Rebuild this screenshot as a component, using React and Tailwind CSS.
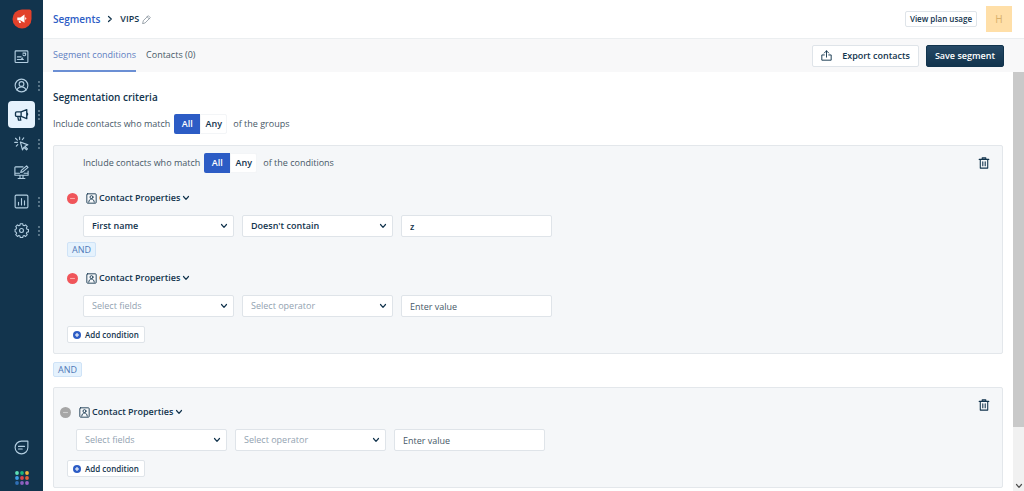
import React from 'react';

const line = {
  fill: 'none',
  stroke: 'currentColor',
  strokeWidth: 1.5,
  strokeLinecap: 'round',
  strokeLinejoin: 'round',
};

const Icon = ({ className = 'size-[15px]', children, ...rest }) => (
  <svg viewBox="0 0 20 20" className={className} aria-hidden="true" {...line} {...rest}>
    {children}
  </svg>
);

const navItems = [
  {
    label: 'Dashboard',
    icon: (
      <Icon>
        <rect x="1.5" y="2.5" width="17" height="15.5" rx="1" />
        <path d="M4.5 10.5h5M4.5 14h8M9.5 14l2-2M12 5.5h3.5v2.2a1.8 1.8 0 0 1-3.5 0" />
      </Icon>
    ),
  },
  {
    label: 'Contacts',
    menu: true,
    icon: (
      <Icon>
        <circle cx="10" cy="10" r="8.5" />
        <circle cx="10" cy="8" r="3.2" />
        <path d="M4 16c1-3 3-4.2 6-4.2s5 1.2 6 4.2" />
      </Icon>
    ),
  },
  {
    label: 'Campaigns',
    menu: true,
    active: true,
    icon: (
      <Icon strokeWidth="1.8">
        <path d="M9.5 6.500 17 3.500v12L9.500 12.500M9.500 6.500H3.500a1.500 1.500 0 0 0-1.500 1.500v3a1.500 1.500 0 0 0 1.500 1.500h6zM5 12.500l1 5h3l-1-5M17 8c1.500 0 1.500 3 0 3" />
      </Icon>
    ),
  },
  {
    label: 'Journeys',
    menu: true,
    icon: (
      <Icon>
        <path d="m8.500 8 10 3.800-4 1.900 3.500 3.600-1.300 1.300-3.500-3.600-1.900 3.500z" />
        <path d="M7.500 1.500v3M2 3l2.500 2.500M1 8.500h3.500M3 13.500 5 11.500M13 2.500 11 5" />
      </Icon>
    ),
  },
  {
    label: 'Web pages',
    icon: (
      <Icon>
        <path d="M12 2.500H2a.8.8 0 0 0-.8.8v10.400h17.600V8M1.200 11h6M13.500 11h5.300M8 13.700V18M12 13.700V18M5.500 18h9" />
        <path d="m9 10 .8-2.800 7-6 1.900 2-7 6z" />
      </Icon>
    ),
  },
  {
    label: 'Reports',
    menu: true,
    icon: (
      <Icon>
        <rect x="1.5" y="1.5" width="17" height="17" rx="1.5" />
        <path d="M6 11v3.500M10 6v8.500M14 9v5.500" />
      </Icon>
    ),
  },
  {
    label: 'Settings',
    menu: true,
    icon: (
      <Icon>
        <path d="M8.300 1.500h3.400l.5 2.300 1.600.7 2-1.300 2.400 2.400-1.300 2 .7 1.600 2.300.5v3.400l-2.300.5-.7 1.600 1.300 2-2.400 2.400-2-1.300-1.600.7-.5 2.300H8.300l-.5-2.300-1.600-.7-2 1.300-2.400-2.400 1.300-2-.7-1.600L.9 13.100V9.700l1.500-.5.7-1.600-1.300-2 2.400-2.400 2 1.300 1.600-.7z" transform="translate(.6 -.5) scale(.94)" />
        <circle cx="10" cy="10" r="2.6" />
      </Icon>
    ),
  },
];

const appDots = [
  'fill-[#5ee0b5]', 'fill-[#19b37d]', 'fill-[#f2b63c]',
  'fill-[#3f9fe8]', 'fill-[#e0434b]', 'fill-[#e2603a]',
  'fill-[#2f6fb5]', 'fill-[#8a5fc0]', 'fill-[#9a62c4]',
];

const Sidebar = () => (
  <nav className="flex w-[43px] shrink-0 flex-col items-center bg-[#12344d] pt-[9px] pb-1.5" aria-label="Main">
    <a href="#home" aria-label="Home" className="mb-3.5">
      <svg viewBox="0 0 20 20" className="size-5" aria-hidden="true">
        <path d="M10 .5h7.500a2 2 0 0 1 2 2V10A9.500 9.500 0 1 1 10 .5z" fill="#e2412b" />
        <path d="M5.300 8.600h3L12.500 5.500v8.200L8.300 11.200h-3zM6.500 11.700h1.800l.7 2.400H7.300zM13.200 8.300c1.600.2 1.600 2.300 0 2.500z" fill="#fff" />
      </svg>
    </a>
    <ul className="flex w-full flex-col gap-0.5">
      {navItems.map((item) => (
        <li key={item.label} className="flex items-center pl-2">
          <a
            href="#nav"
            aria-label={item.label}
            className={`flex size-[27px] items-center justify-center rounded-[4px] ${
              item.active ? 'bg-[#e5f2fd] text-[#12344d]' : 'text-[#b4cfe2]'
            }`}
          >
            {item.icon}
          </a>
          {item.menu && (
            <svg viewBox="0 0 2 10" className="ml-[3px] h-2.5 w-0.5 fill-[#7d95a6]" aria-hidden="true">
              <circle cx="1" cy="1" r=".9" />
              <circle cx="1" cy="5" r=".9" />
              <circle cx="1" cy="9" r=".9" />
            </svg>
          )}
        </li>
      ))}
    </ul>
    <a href="#chat" aria-label="Chat" className="mt-auto text-[#b4cfe2]">
      <Icon>
        <path d="M10 1.500h8.500V10A8.500 8.500 0 1 1 10 1.500zM6 8.500h8M6 12h5" />
      </Icon>
    </a>
    <button type="button" aria-label="Switch app" className="mt-4">
      <svg viewBox="0 0 14 14" className="size-3.5" aria-hidden="true">
        {appDots.map((fill, i) => (
          <circle key={i} cx={2 + (i % 3) * 5} cy={2 + Math.floor(i / 3) * 5} r="1.9" className={fill} />
        ))}
      </svg>
    </button>
  </nav>
);

const Chevron = ({ className }) => (
  <svg viewBox="0 0 8 8" className={className} {...line} strokeWidth="1.2" aria-hidden="true">
    <path d="m1.500 2.500 2.500 2.800 2.500-2.800" />
  </svg>
);

const MatchRow = ({ target, className }) => (
  <div className={`flex items-center text-[9px] text-[#475867] ${className}`}>
    <span>Include contacts who match</span>
    <div className="mr-1.5 ml-1 flex h-5 font-semibold">
      <button type="button" aria-pressed="true" className="w-[26px] rounded-l-[2px] bg-[#2c5cc5] text-white">
        All
      </button>
      <button type="button" aria-pressed="false" className="w-[27px] rounded-r-[2px] border border-[#f3f5f7] bg-white text-[#12344d]">
        Any
      </button>
    </div>
    <span>{target}</span>
  </div>
);

const SelectBox = ({ label, value, placeholder }) => (
  <div className="relative w-[151px]">
    <select
      aria-label={label}
      defaultValue={value || ''}
      className={`block h-[22px] w-full appearance-none rounded-[2px] border border-[#dfe4e9] bg-white px-2 text-[9px] ${
        value ? 'font-semibold text-[#12344d]' : 'text-[#92a2b1]'
      }`}
    >
      <option value={value || ''}>{value || placeholder}</option>
    </select>
    <Chevron className="pointer-events-none absolute top-[7px] right-1.5 size-2 text-[#12344d]" />
  </div>
);

const Condition = ({ field, operator, value, disabled }) => (
  <div>
    <div className="flex h-4 items-center">
      <button type="button" aria-label="Remove condition" disabled={disabled}>
        <svg viewBox="0 0 10 10" className="size-[11px]" aria-hidden="true">
          <circle cx="5" cy="5" r="5" fill={disabled ? '#a6a6a6' : '#f0555a'} />
          <path d="M2.800 5h4.400" stroke={disabled ? '#cfcfcf' : '#fba9a9'} />
        </svg>
      </button>
      <button type="button" className="ml-2 flex items-center text-[9px] font-semibold text-[#12344d]">
        <Icon className="mr-0.5 size-[11px]" strokeWidth="1.6">
          <rect x="1.5" y="1.5" width="17" height="17" rx="1.5" />
          <circle cx="10" cy="7.5" r="2.7" />
          <path d="M5 16.500c.5-3.500 2-5.500 5-5.500s4.500 2 5 5.500" />
        </Icon>
        Contact Properties
        <Chevron className="ml-0.5 size-2" />
      </button>
    </div>
    <div className="mt-[9px] ml-4 flex gap-2">
      <SelectBox label="Field" value={field} placeholder="Select fields" />
      <SelectBox label="Operator" value={operator} placeholder="Select operator" />
      <input
        type="text"
        aria-label="Value"
        defaultValue={value}
        placeholder="Enter value"
        className="h-[22px] w-[151px] rounded-[2px] border border-[#dfe4e9] bg-white px-2 text-[9px] font-semibold text-[#12344d] placeholder:font-normal placeholder:text-[#475867]"
      />
    </div>
  </div>
);

const AndTag = ({ className }) => (
  <div className={`flex h-[15px] w-fit items-center rounded-[2px] border border-[#cfe3f7] bg-[#e5f2fd] px-1 text-[9px] text-[#5078b8] ${className}`}>
    AND
  </div>
);

const AddCondition = () => (
  <button
    type="button"
    className="ml-[13px] flex h-[17px] items-center gap-1 rounded-[2px] border border-[#dfe4e9] bg-white px-[5px] text-[8px] font-semibold text-[#12344d]"
  >
    <svg viewBox="0 0 10 10" className="size-2" aria-hidden="true">
      <circle cx="5" cy="5" r="5" fill="#2c5cc5" />
      <path d="M5 2.500v5M2.500 5h5" stroke="#fff" strokeWidth="1.3" />
    </svg>
    Add condition
  </button>
);

const Group = ({ children }) => (
  <section className="relative rounded-[2px] border border-[#e3e7eb] bg-[#f5f7f9] pb-2.5">
    <button type="button" aria-label="Delete group" className="absolute top-[11px] right-3 text-[#12344d]">
      <Icon className="size-3" strokeWidth="1.8">
        <path d="M2 4h16M7 4V1.500h6V4M3.800 4v14.500h12.400V4M8 8v6.500M12 8v6.500" />
      </Icon>
    </button>
    {children}
  </section>
);

const Header = () => (
  <header className="flex h-[39px] shrink-0 items-center border-b border-[#ebeef0] pr-3 pl-2.5">
    <a href="#segments" className="text-[10px] font-semibold text-[#2c5cc5]">
      Segments
    </a>
    <Chevron className="mx-1.5 size-2 -rotate-90 text-[#12344d]" />
    <span className="text-[9px] font-semibold text-[#12344d]">VIPS</span>
    <button type="button" aria-label="Rename segment" className="ml-[3px] text-[#6f7c87]">
      <Icon className="size-[9px]">
        <path d="m1.500 18.500 1.500-6L14 1.500l4.500 4.500-11 11zM11.500 4l4.500 4.500" />
      </Icon>
    </button>
    <button type="button" className="ml-auto h-4 rounded-[2px] border border-[#dfe4e9] bg-white px-1 text-[8px] font-semibold text-[#12344d]">
      View plan usage
    </button>
    <button type="button" aria-label="Account" className="ml-[9px] size-[26px] bg-[#ffdfa8] text-[10px] text-[#d8b06c]">
      H
    </button>
  </header>
);

const Toolbar = () => (
  <div className="flex h-[33px] shrink-0 items-center bg-[#f8f8f9] pr-5 pl-2.5 text-[9px]">
    <div className="flex gap-2.5 self-stretch">
      <a href="#conditions" className="flex items-center border-b-2 border-[#6b8fd4] text-[#5f80c2]">
        Segment conditions
      </a>
      <a href="#contacts" className="flex items-center border-b-2 border-transparent text-[#475867]">
        Contacts (0)
      </a>
    </div>
    <button type="button" className="ml-auto flex h-[22px] items-center gap-2.5 rounded-[2px] border border-[#dfe4e9] bg-white px-2 font-semibold text-[#12344d]">
      <Icon className="size-[11px]" strokeWidth="1.7">
        <path d="M6 9H1.500v9.500h17V9H14M10 13V1.500M6 5.500l4-4 4 4" />
      </Icon>
      Export contacts
    </button>
    <button type="button" className="ml-[7px] h-[22px] rounded-[2px] border border-[#12344d] bg-linear-to-b from-[#264966] to-[#12344d] px-2 font-semibold text-white">
      Save segment
    </button>
  </div>
);

const App = () => (
  <div className="flex h-screen overflow-hidden bg-white font-['Open_Sans',sans-serif]">
    <Sidebar />
    <div className="flex min-w-0 flex-1 flex-col">
      <Header />
      <Toolbar />
      <div className="flex min-h-0 flex-1">
        <main className="min-w-0 flex-1 overflow-hidden px-2.5 pt-[17px]">
          <h1 className="text-[10px] leading-4 font-semibold text-[#12344d]">Segmentation criteria</h1>
          <MatchRow target="of the groups" className="mt-[9px] mb-[11px]" />

          <Group>
            <MatchRow target="of the conditions" className="mt-[7px] ml-[29px]" />
            <div className="mt-[17px] ml-[13px]">
              <Condition field="First name" operator="Doesn't contain" value="z" />
              <AndTag className="mt-[5px] mb-[13px]" />
              <Condition />
            </div>
            <div className="mt-[9px]">
              <AddCondition />
            </div>
          </Group>

          <AndTag className="mt-2 mb-2.5" />

          <Group>
            <div className="mt-4 mb-[9px] ml-1.5">
              <Condition disabled />
            </div>
            <AddCondition />
          </Group>
        </main>

        {/* Scrollbar */}
        <div className="flex w-[11px] shrink-0 flex-col items-center bg-[#f1f1f1]" aria-hidden="true">
          <div className="w-full flex-[85] bg-[#c9c9c9]"></div>
          <div className="flex flex-[15] items-end pb-px">
            <Chevron className="size-2 text-[#505050]" />
          </div>
        </div>
      </div>
    </div>
  </div>
);

export default App;
